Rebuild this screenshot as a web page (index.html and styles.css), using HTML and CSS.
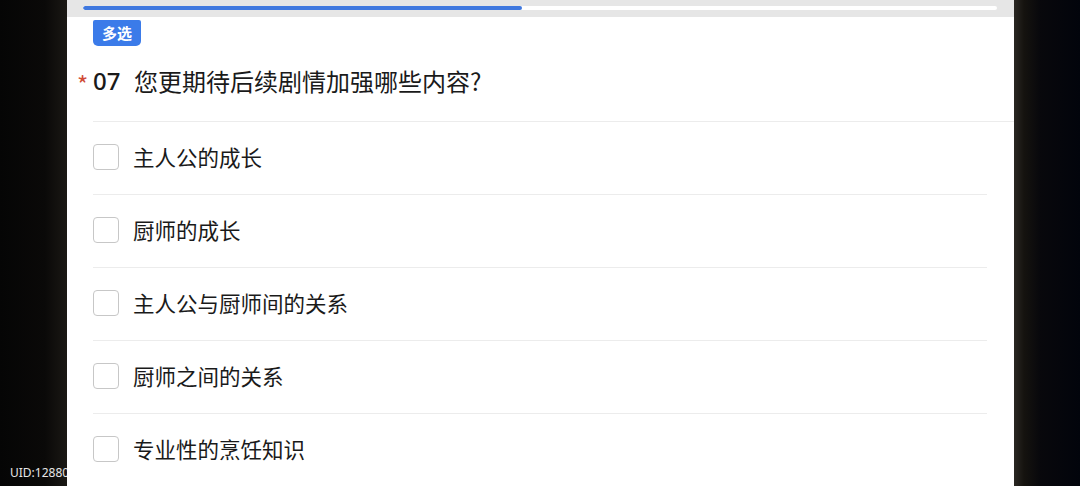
FILE: index.html
```html
<!DOCTYPE html>
<html lang="zh-CN">
<head>
  <meta charset="UTF-8" />
  <meta name="viewport" content="width=device-width, initial-scale=1.0" />
  <title>问卷</title>
  <link rel="stylesheet" href="styles.css">
</head>
<body>

  <div class="uid">UID:128800</div>

  <main class="panel">
    <div class="progress">
      <div class="track"><div class="fill" style="width: 48%"></div></div>
    </div>

    <span class="badge">多选</span>

    <h2 class="question">
      <span class="req">*</span>
      <span class="num">07</span>
      <span class="title">您更期待后续剧情加强哪些内容?</span>
    </h2>

    <ul class="options">
      <li><span class="box"></span>主人公的成长</li>
      <li><span class="box"></span>厨师的成长</li>
      <li><span class="box"></span>主人公与厨师间的关系</li>
      <li><span class="box"></span>厨师之间的关系</li>
      <li><span class="box"></span>专业性的烹饪知识</li>
    </ul>
  </main>

</body>
</html>
```

FILE: styles.css
```css
body {
  margin: 0;
  width: 1080px;
  height: 486px;
  overflow: hidden;
  position: relative;
  font-family: "Noto Sans CJK SC", "Noto Sans", sans-serif;
  color: #1a1a1a;
  background:
    linear-gradient(to right, rgba(0,0,0,0) 1010px, #2a2723 1014px, #15130f 1024px, #08080c 1040px, #02040c 1080px),
    linear-gradient(to right, #050505 0, #0a0908 45px, #1a1814 67px);
}

.uid {
  position: absolute;
  left: 10px;
  top: 464px;
  font-family: "Noto Sans", sans-serif;
  font-size: 12px;
  color: #e6e6e6;
}

.panel {
  position: relative;
  margin-left: 67px;
  width: 947px;
  height: 486px;
  background: #fff;
  padding-left: 26px;
  box-sizing: border-box;
}

.progress {
  height: 17px;
  margin-left: -26px;
  background: #e6e6e6;
  padding: 6px 0 0 16px;
  box-sizing: border-box;
}

.track {
  width: 914px;
  height: 4px;
  background: #fff;
  border-radius: 2px;
  overflow: hidden;
}

.fill {
  height: 100%;
  background: #3f78df;
  border-radius: 2px;
}

.badge {
  display: inline-block;
  margin-top: 3px;
  width: 48px;
  height: 26px;
  line-height: 25px;
  text-align: center;
  background: #3b7be9;
  color: #fff;
  font-size: 15px;
  font-weight: bold;
  border-radius: 2px 2px 5px 5px;
  vertical-align: top;
}

.question {
  position: relative;
  margin: 0;
  height: 76px;
  padding-bottom: 7px;
  box-sizing: border-box;
  display: flex;
  align-items: center;
  font-weight: normal;
  font-size: 24px;
  border-bottom: 1px solid #ececec;
}

.req {
  position: absolute;
  left: -16px;
  top: 20px;
  color: #d04a36;
  font-size: 24px;
}

.num {
  font-family: "Noto Sans", sans-serif;
  font-weight: 500;
  font-size: 24px;
  width: 41px;
}

.options {
  list-style: none;
  margin: 0;
  padding: 0;
  width: 894px;
}

.options li {
  height: 73px;
  padding-bottom: 3px;
  box-sizing: border-box;
  display: flex;
  align-items: center;
  font-size: 21.5px;
  border-bottom: 1px solid #ececec;
}

.box {
  flex-shrink: 0;
  width: 24px;
  height: 24px;
  border: 1.5px solid #c7c7c7;
  border-radius: 4px;
  margin-right: 14px;
}
```
